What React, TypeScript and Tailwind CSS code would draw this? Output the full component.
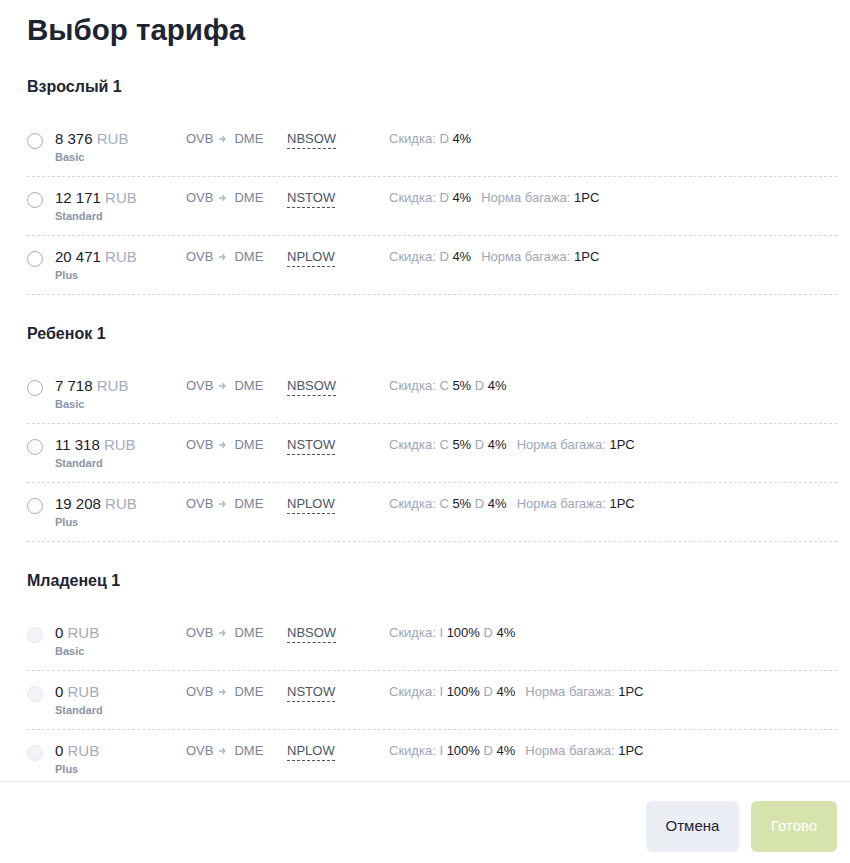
import React from 'react'

type Fare = {
  price: string
  name: string
  code: string
  baggage?: string
}

type Section = {
  title: string
  disabled?: boolean
  discounts: [string, string][]
  fares: Fare[]
}

const sections: Section[] = [
  {
    title: 'Взрослый 1',
    discounts: [['D', '4%']],
    fares: [
      { price: '8 376', name: 'Basic', code: 'NBSOW' },
      { price: '12 171', name: 'Standard', code: 'NSTOW', baggage: '1PC' },
      { price: '20 471', name: 'Plus', code: 'NPLOW', baggage: '1PC' },
    ],
  },
  {
    title: 'Ребенок 1',
    discounts: [
      ['C', '5%'],
      ['D', '4%'],
    ],
    fares: [
      { price: '7 718', name: 'Basic', code: 'NBSOW' },
      { price: '11 318', name: 'Standard', code: 'NSTOW', baggage: '1PC' },
      { price: '19 208', name: 'Plus', code: 'NPLOW', baggage: '1PC' },
    ],
  },
  {
    title: 'Младенец 1',
    disabled: true,
    discounts: [
      ['I', '100%'],
      ['D', '4%'],
    ],
    fares: [
      { price: '0', name: 'Basic', code: 'NBSOW' },
      { price: '0', name: 'Standard', code: 'NSTOW', baggage: '1PC' },
      { price: '0', name: 'Plus', code: 'NPLOW', baggage: '1PC' },
    ],
  },
]

function Arrow() {
  return (
    <svg width="7" height="8" viewBox="0 0 7 8" className="ml-[6px] mr-[8px] shrink-0" fill="none">
      <path d="M0 4h6M3.4 1.3L6 4 3.4 6.7" stroke="#aeb6c5" strokeWidth="1.3" />
    </svg>
  )
}

function FareRow({ fare, disabled, discounts }: { fare: Fare; disabled?: boolean; discounts: [string, string][] }) {
  return (
    <div className="flex items-start py-[11px] border-b border-dashed border-[#d3d9e3]">
      {/* radio */}
      <div
        className={
          disabled
            ? 'mt-[4px] mr-3 w-4 h-4 shrink-0 rounded-full border border-[#e3e7ef] bg-[#f2f4f8]'
            : 'mt-[4px] mr-3 w-4 h-4 shrink-0 rounded-full border-[1.5px] border-[#a8b0bf] bg-white'
        }
      />
      <div className="w-[131px] shrink-0">
        <div className="text-[15px] leading-5 text-[#1a202c]">
          {fare.price} <span className="text-[#a3abbd]">RUB</span>
        </div>
        <div className="text-[11px] leading-4 font-semibold text-[#8b94a8]">{fare.name}</div>
      </div>
      <div className="w-[101px] shrink-0 flex items-center h-5 text-[13px] text-[#7a8499]">
        <span>OVB</span>
        <Arrow />
        <span>DME</span>
      </div>
      <div className="w-[102px] shrink-0 flex">
        <span className="block text-[13px] leading-[19px] text-[#4a5568] border-b border-dashed border-[#4a5568]">
          {fare.code}
        </span>
      </div>
      <div className="text-[13px] leading-5 text-[#9ea6b7]">
        Скидка:
        {discounts.map(([c, v]) => (
          <span key={c}>
            {' '}
            {c} <span className="text-[#1a202c]">{v}</span>
          </span>
        ))}
        {fare.baggage && (
          <span className="ml-2.5">
            Норма багажа: <span className="text-[#1a202c]">{fare.baggage}</span>
          </span>
        )}
      </div>
    </div>
  )
}

export default function App() {
  return (
    <div className="h-screen w-full overflow-hidden bg-white flex flex-col font-['Liberation_Sans',Arial,sans-serif]">
      <div className="h-[781px] shrink-0 overflow-hidden pl-[27px] pr-[13px] pt-3">
        <h1 className="text-[29.5px] leading-9 font-bold text-[#1f2433]">Выбор тарифа</h1>
        {sections.map((s) => (
          <section key={s.title} className="pt-[27px]">
            <h2 className="text-base leading-6 font-bold text-[#1f2433] mb-[19px]">{s.title}</h2>
            {s.fares.map((f) => (
              <FareRow key={f.code} fare={f} disabled={s.disabled} discounts={s.discounts} />
            ))}
          </section>
        ))}
      </div>
      <div className="border-t border-[#e3e6ed] flex justify-end gap-3 pt-[19px] pr-[13px]">
        <button className="h-[51px] w-[93px] rounded-md bg-[#ebeef5] text-[15px] text-[#1f2433]">Отмена</button>
        <button className="h-[51px] w-[86px] rounded-md bg-[#d6e3ad] text-[15px] text-white">Готово</button>
      </div>
    </div>
  )
}
